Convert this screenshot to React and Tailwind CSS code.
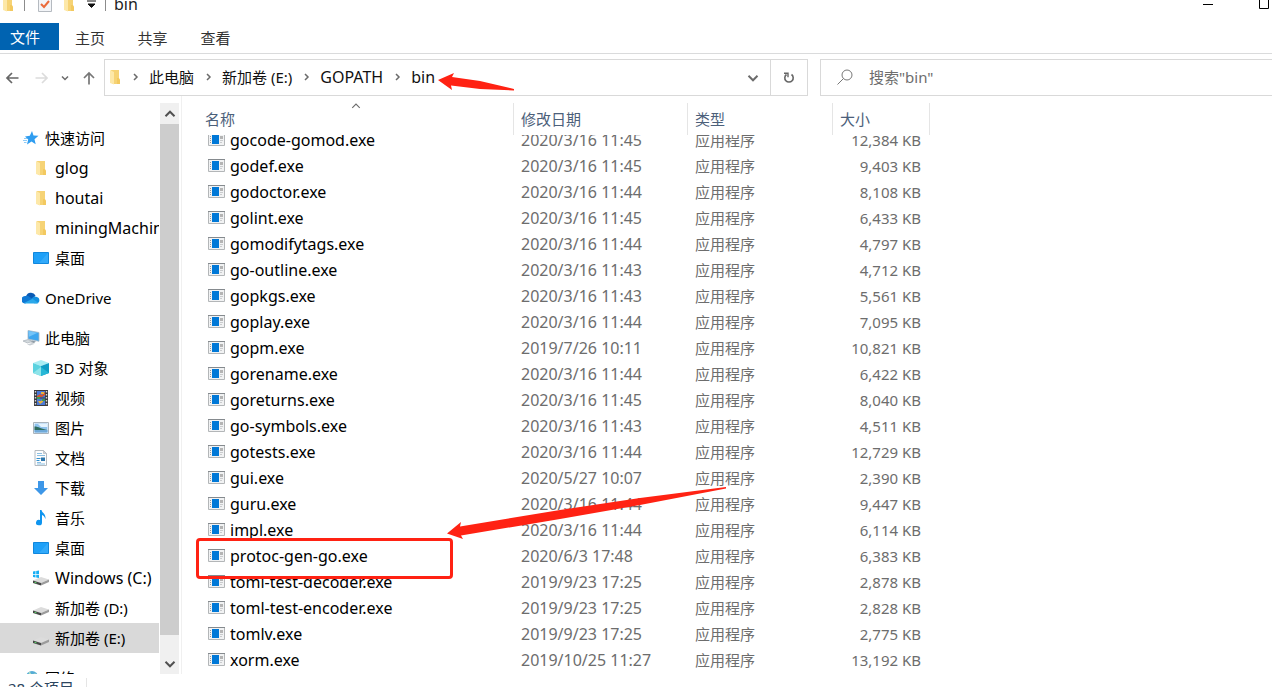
import React from "react";

const FILES = [
  { name: "gocode-gomod.exe", date: "2020/3/16 11:45", size: "12,384 KB" },
  { name: "godef.exe", date: "2020/3/16 11:45", size: "9,403 KB" },
  { name: "godoctor.exe", date: "2020/3/16 11:44", size: "8,108 KB" },
  { name: "golint.exe", date: "2020/3/16 11:45", size: "6,433 KB" },
  { name: "gomodifytags.exe", date: "2020/3/16 11:44", size: "4,797 KB" },
  { name: "go-outline.exe", date: "2020/3/16 11:43", size: "4,712 KB" },
  { name: "gopkgs.exe", date: "2020/3/16 11:43", size: "5,561 KB" },
  { name: "goplay.exe", date: "2020/3/16 11:44", size: "7,095 KB" },
  { name: "gopm.exe", date: "2019/7/26 10:11", size: "10,821 KB" },
  { name: "gorename.exe", date: "2020/3/16 11:44", size: "6,422 KB" },
  { name: "goreturns.exe", date: "2020/3/16 11:45", size: "8,040 KB" },
  { name: "go-symbols.exe", date: "2020/3/16 11:43", size: "4,511 KB" },
  { name: "gotests.exe", date: "2020/3/16 11:44", size: "12,729 KB" },
  { name: "gui.exe", date: "2020/5/27 10:07", size: "2,390 KB" },
  { name: "guru.exe", date: "2020/3/16 11:44", size: "9,447 KB" },
  { name: "impl.exe", date: "2020/3/16 11:44", size: "6,114 KB" },
  { name: "protoc-gen-go.exe", date: "2020/6/3 17:48", size: "6,383 KB" },
  { name: "toml-test-decoder.exe", date: "2019/9/23 17:25", size: "2,878 KB" },
  { name: "toml-test-encoder.exe", date: "2019/9/23 17:25", size: "2,828 KB" },
  { name: "tomlv.exe", date: "2019/9/23 17:25", size: "2,775 KB" },
  { name: "xorm.exe", date: "2019/10/25 11:27", size: "13,192 KB" },
];

const FolderIcon = () => (
  <svg width="12" height="16" viewBox="0 0 12 16" className="shrink-0">
    <path d="M2 1h8v9l1 1v4H3z" fill="#f6d375" />
    <path d="M8 9h2l1 2v4H8z" fill="#f3c95f" />
    <path d="M1 1l4 2v12.500L1 14z" fill="#fde8a8" />
  </svg>
);

const StarIcon = () => (
  <svg width="16" height="16" viewBox="0 0 16 16">
    <path d="M9 1l1.500 4.500 5 .3-4 3.400 1.200 5L8.500 11.500 4 14.500l1.200-5L2 6.500l4.800-.7z" fill="#2f9df0" />
    <path d="M1 8.500h3M0 10.500h4M1 12.500h2.500" stroke="#8fcbf7" />
  </svg>
);

const DesktopIcon = () => (
  <svg width="16" height="16" viewBox="0 0 16 16">
    <path d="M.5 2.500h15v11H.5z" fill="#1ea0f8" stroke="#1187dc" />
    <path d="M15 3v10H6z" fill="#48b4fb" opacity=".5" />
  </svg>
);

const CloudIcon = () => (
  <svg width="18" height="16" viewBox="0 0 18 16">
    <path d="M4 6.500A5.200 5.200 0 0113.500 5.500L10 10 1 8a3.500 3.500 0 013-1.500z" fill="#0a5ab4" />
    <path d="M3.500 6a4 4 0 013.800.8L12 10l-9 3.500A3.700 3.700 0 013.500 6z" fill="#0f78d4" />
    <path d="M9.500 8.500l2.500-2A4.800 4.800 0 0115 7a3.300 3.300 0 01.5 6.200H12z" fill="#1490df" />
    <path d="M2 13l8.500-4.300L16.500 13a3 3 0 01-1.500.5H4A4 4 0 012 13z" fill="#2aa8ea" />
  </svg>
);

const ThisPcIcon = () => (
  <svg width="18" height="16" viewBox="0 0 18 16">
    <path d="M6 .5l11 2v8.800L6 9z" fill="#3ea6ee" stroke="#a7b8c5" strokeWidth=".8" />
    <path d="M6.500 1l9 1.700-8.500 4z" fill="#74c4f8" />
    <path d="M10 10.500l4 1-2 1.500-4-1z" fill="#8e9aa4" />
    <path d="M1 11l5-1.500 4.500 1.800-5 1.700z" fill="#d3d9dd" stroke="#9ba5ad" strokeWidth=".6" />
    <path d="M5 14.500l5-1.500 3 .8-5 1.700z" fill="#c8ced3" />
  </svg>
);

const CubeIcon = () => (
  <svg width="16" height="16" viewBox="0 0 16 16">
    <path d="M8 0l8 3-8 3-8-3z" fill="#a9edf3" />
    <path d="M0 3l8 3v10l-8-3z" fill="#5bd2df" />
    <path d="M16 3L8 6v10l8-3z" fill="#0f9cc4" />
    <path d="M0 13l8-6v9z" fill="#8fe4ea" />
    <path d="M16 13L8 7v9z" fill="#27b7d6" />
  </svg>
);

const VideoIcon = () => (
  <svg width="16" height="16" viewBox="0 0 16 16">
    <path d="M1 0h14v16H1z" fill="#3b3b3f" />
    <path d="M2.500 1v15M13.500 1v15" stroke="#d9d9d9" strokeWidth="1.400" strokeDasharray="1.500 1.500" />
    <path d="M4 1h8v6.500H4zM4 8.500h8V15H4z" fill="#4a79d8" />
    <path d="M4 6l3-2 2 1 3-3v3L9 7H4z" fill="#d5572c" />
    <path d="M8 2h3v2H8zM5 11h3l2-1.500V12l-3 2z" fill="#e8b13b" />
    <path d="M4 7h3v2H4zM9 9h3v2H9z" fill="#3a9b57" />
  </svg>
);

const PictureIcon = () => (
  <svg width="16" height="16" viewBox="0 0 16 16">
    <path d="M.5 2.500h15v11H.5z" fill="#fff" stroke="#a9b3bb" />
    <path d="M1.500 3.500h13v9h-13z" fill="#8fc3ee" />
    <path d="M5 4h9.500v3H8z" fill="#e5f3fd" />
    <path d="M1.500 6.500c4 0 7 2.500 13 3.500H1.500z" fill="#2e6d5f" />
    <path d="M1.500 10h13v2.500h-13z" fill="#6fa9d8" />
  </svg>
);

const DocumentIcon = () => (
  <svg width="16" height="16" viewBox="0 0 16 16">
    <path d="M2 .5h8.500l3 3v12H2z" fill="#fdfdfd" stroke="#b4bbc1" />
    <path d="M10.500.5v3h3z" fill="#cfd6db" stroke="#b4bbc1" strokeWidth=".7" />
    <path d="M4 3.500h5M4 5.500h8M4 12.500h4M4 14h8" stroke="#8bbfe2" />
    <path d="M3.500 8.500h4M3.500 10.500h3" stroke="#3291d0" />
    <path d="M8 7.500h4v3.500H8z" fill="#2d77ad" />
  </svg>
);

const DownloadIcon = () => (
  <svg width="16" height="16" viewBox="0 0 16 16">
    <path d="M5 1h6v7h4l-7 7-7-7h4z" fill="#3d97e8" />
  </svg>
);

const MusicIcon = () => (
  <svg width="16" height="16" viewBox="0 0 16 16">
    <path d="M7 0h1.500c.5 3 4.500 3.500 4 9-1-2.500-2-3.500-3.500-4v7.500a3 2.800 0 11-2-2.600z" fill="#0f95ef" />
  </svg>
);

const DriveIcon = ({ system }) => (
  <svg width="16" height="16" viewBox="0 0 16 16">
    <path d="M0 10.500l8-3.500 8 2.500-8 3.500z" fill="#dcdcdc" />
    <path d="M0 10.500l8 2.500v2.500L0 13z" fill="#474747" />
    <path d="M8 13l8-3.500v2.500l-8 3.500z" fill="#9b9b9b" />
    <path d="M1.500 12.300l2 .6" stroke="#5fe06e" />
    {system && <path d="M0 1.500l2.500-.4V4H0zM3.200 1L6 .5V4H3.200zM0 4.700h2.500v2.800L0 7.100zM3.200 4.700H6V8l-2.800-.4z" fill="#17aef4" />}
  </svg>
);

const NetworkIcon = () => (
  <svg width="16" height="16" viewBox="0 0 16 16">
    <circle cx="9" cy="7" r="6" fill="#55acd6" />
    <path d="M6 2.500c2 1 1 3 3 3s1-2 4-1" stroke="#b6e3c0" strokeWidth="1.500" fill="none" />
    <path d="M1 9h7v6H1z" fill="#4a8dc0" />
  </svg>
);

const ExeIcon = () => (
  <svg width="17" height="13" viewBox="0 0 17 13" className="shrink-0 mb-0.5">
    <path d="M.5.5h16v12H.5z" fill="#f1f2f3" stroke="#b3b6b8" />
    <path d="M0 .5h17" stroke="#858a8e" />
    <path d="M2 3.500h1M2 5.500h1M2 7.500h1M2 9.500h1" stroke="#9a9a9a" />
    <path d="M4 2h7v9H4z" fill="#0078d7" />
    <path d="M12 3h3v3h-3z" fill="#b4b4b4" />
    <path d="M12 7.500h3M12 9.500h2" stroke="#c9cbcd" />
  </svg>
);

// direction: right | down | up
const CHEVRONS = {
  right: "M3 1l3 3-3 3",
  down: "M1 2.500l3 3 3-3",
  up: "M1 5.500l3-3 3 3",
};

const Chevron = ({ direction, size = 8, color = "#6b6b6b", width = 1.3 }) => (
  <svg width={size} height={size} viewBox="0 0 8 8" className="shrink-0">
    <path d={CHEVRONS[direction]} fill="none" stroke={color} strokeWidth={width} />
  </svg>
);

const NavArrow = ({ d, color }) => (
  <svg width="14" height="14" viewBox="0 0 14 14">
    <path d={d} fill="none" stroke={color} strokeWidth="1.700" />
  </svg>
);

const TREE = [
  {
    label: "快速访问",
    icon: <StarIcon />,
    children: [
      { label: "glog", icon: <FolderIcon />, latin: true },
      { label: "houtai", icon: <FolderIcon />, latin: true },
      { label: "miningMachine", icon: <FolderIcon />, latin: true },
      { label: "桌面", icon: <DesktopIcon /> },
    ],
  },
  { label: "OneDrive", icon: <CloudIcon />, children: [] },
  {
    label: "此电脑",
    icon: <ThisPcIcon />,
    children: [
      { label: "3D 对象", icon: <CubeIcon /> },
      { label: "视频", icon: <VideoIcon /> },
      { label: "图片", icon: <PictureIcon /> },
      { label: "文档", icon: <DocumentIcon /> },
      { label: "下载", icon: <DownloadIcon /> },
      { label: "音乐", icon: <MusicIcon /> },
      { label: "桌面", icon: <DesktopIcon /> },
      { label: "Windows (C:)", icon: <DriveIcon system />, latin: true },
      { label: "新加卷 (D:)", icon: <DriveIcon /> },
      { label: "新加卷 (E:)", icon: <DriveIcon />, selected: true },
    ],
  },
  { label: "网络", icon: <NetworkIcon />, children: [] },
];

const CRUMBS = [
  { label: "此电脑" },
  { label: "新加卷 (E:)" },
  { label: "GOPATH", latin: true },
  { label: "bin", latin: true },
];

const TitleBar = () => (
  <header className="flex items-center h-2 mb-[15px] shrink-0">
    <div className="flex items-center flex-1 pl-0.5">
      <FolderIcon />
      <span className="w-px h-[14px] ml-[10px] bg-[#8c8c8c]"></span>
      <button aria-label="属性" className="ml-[13px]">
        <svg width="14" height="16" viewBox="0 0 14 16">
          <path d="M.5.5h13v15H.5z" fill="#f3f5f8" stroke="#b5bac0" />
          <path d="M3 8l3 3 5-6" fill="none" stroke="#ea6b3c" strokeWidth="2" />
        </svg>
      </button>
      <button aria-label="新建文件夹" className="ml-[11px]">
        <FolderIcon />
      </button>
      <button aria-label="自定义快速访问工具栏" className="ml-3">
        <svg width="9" height="8" viewBox="0 0 9 8">
          <path d="M0 1h9M1 4h7L4.500 7.500z" fill="#111" stroke="#111" strokeWidth="1" />
        </svg>
      </button>
      <span className="w-px h-[14px] ml-[9px] bg-[#8c8c8c]"></span>
      <h1 className="ml-2 text-base leading-5">bin</h1>
    </div>
    <button aria-label="最小化" className="mr-[46px]">
      <svg width="10" height="10" viewBox="0 0 10 10">
        <path d="M0 5.500h10" stroke="#000" />
      </svg>
    </button>
    <button aria-label="最大化" className="mr-[3px]">
      <svg width="10" height="10" viewBox="0 0 10 10">
        <path d="M.5.5h9v9H.5z" fill="none" stroke="#000" />
      </svg>
    </button>
  </header>
);

const Ribbon = () => (
  <nav className="flex h-[31px] shrink-0 border-b border-[#dadbdc] text-[#333]">
    <button className="w-[59px] h-[27px] pr-[9px] bg-[#0063b1] text-white">文件</button>
    <button className="w-[62px] h-[30px]">主页</button>
    <button className="w-[63px] h-[30px]">共享</button>
    <button className="w-[63px] h-[30px]">查看</button>
  </nav>
);

const AddressRow = () => (
  <div className="flex items-stretch h-[37px] mt-[5px] shrink-0">
    <div className="flex items-center w-[104px] pl-[5px] shrink-0">
      <button aria-label="后退">
        <NavArrow d="M13.500 7H2M7 2L2 7l5 5" color="#666" />
      </button>
      <button aria-label="前进" className="ml-4">
        <NavArrow d="M.5 7H12M7 2l5 5-5 5" color="#dcdcdc" />
      </button>
      <button aria-label="最近浏览的位置" className="ml-3">
        <Chevron direction="down" width={1.5} />
      </button>
      <button aria-label="上移" className="ml-[13px]">
        <NavArrow d="M7 13.500V2M2 7l5-5 5 5" color="#777" />
      </button>
    </div>
    <div className="flex items-stretch flex-1 border border-[#d9d9d9]">
      <div className="flex items-center flex-1 pl-1 pb-0.5">
        <FolderIcon />
        {CRUMBS.map((crumb) => (
          <React.Fragment key={crumb.label}>
            <span className="flex justify-center w-[28px]">
              <Chevron direction="right" width={1.5} />
            </span>
            <a href="#" className={crumb.latin ? "text-base leading-5 text-[#111]" : "text-[#111]"}>
              {crumb.label}
            </a>
          </React.Fragment>
        ))}
      </div>
      <button aria-label="以前的位置" className="flex items-center justify-center w-[34px]">
        <Chevron direction="down" size={12} />
      </button>
      <button aria-label="刷新" className="flex items-center justify-center w-[37px] border-l border-[#d9d9d9]">
        <svg width="12" height="14" viewBox="0 0 12 14">
          <path d="M8.500 3.500A4.200 4.200 0 113.500 3.500" fill="none" stroke="#666" strokeWidth="1.600" />
          <path d="M1 2.300h4v4" fill="none" stroke="#666" strokeWidth="1.400" />
        </svg>
      </button>
    </div>
    <label className="flex items-center w-[452px] ml-3 pl-4 pb-0.5 border border-r-0 border-[#d9d9d9]">
      <svg width="16" height="16" viewBox="0 0 16 16" className="shrink-0">
        <circle cx="10" cy="6" r="5" fill="none" stroke="#777" />
        <path d="M6.500 9.500L.5 15.500" stroke="#777" />
      </svg>
      <input
        type="text"
        aria-label="搜索"
        placeholder='搜索"bin"'
        className="flex-1 min-w-0 ml-4 outline-none placeholder:text-[#6d6d6d]"
      />
    </label>
  </div>
);

const TreeItem = ({ item, nested }) => (
  <a
    href="#"
    className={`flex items-center h-[30px] whitespace-nowrap ${nested ? "pl-8" : "pl-[22px]"} ${item.latin ? "text-base" : ""} ${item.selected ? "bg-[#d9d9d9]" : ""}`}
  >
    <span className={`flex justify-center shrink-0 ${nested ? "w-[17px] mr-1.5" : "w-[18px] mr-[5px]"}`}>{item.icon}</span>
    {item.label}
  </a>
);

const Sidebar = () => (
  <aside className="flex shrink-0 border-r border-[#f0f0f0]">
    <div className="flex flex-col gap-[10px] w-[159px] pt-[27px] overflow-hidden text-black">
      {TREE.map((group) => (
        <div key={group.label}>
          <TreeItem item={group} />
          {group.children.map((child) => (
            <TreeItem key={child.label} item={child} nested />
          ))}
        </div>
      ))}
    </div>
    <div className="flex flex-col w-[19px] mt-[7px] ml-px mr-[2px] bg-[#f0f0f0]">
      <button aria-label="向上滚动" className="flex items-center justify-center h-[21px] shrink-0">
        <Chevron direction="up" size={12} color="#505050" />
      </button>
      <div className="flex-1 bg-[#cdcdcd]"></div>
      <button aria-label="向下滚动" className="flex items-center justify-center h-[21px] mt-[18px] shrink-0">
        <Chevron direction="down" size={12} color="#505050" />
      </button>
    </div>
  </aside>
);

const HeaderCell = ({ label, className }) => (
  <th className="relative z-10 h-6 p-0 font-normal text-left">
    <div className={`h-8 -mb-2 bg-white border-r border-[#e5e5e5] leading-8 text-[#4c607a] ${className}`}>
      {label}
    </div>
  </th>
);

const FileTable = () => (
  <table className="table-fixed border-collapse w-[748px] mt-[7px]">
    <colgroup>
      <col className="w-[332px]" />
      <col className="w-[174px]" />
      <col className="w-[145px]" />
      <col className="w-[97px]" />
    </colgroup>
    <thead>
      <tr>
        <HeaderCell
          className="pl-[23px]"
          label={
            <>
              名称
              <span className="absolute -top-0.5 left-0 flex justify-center w-full pl-4">
                <Chevron direction="up" size={10} width={0.9} />
              </span>
            </>
          }
        />
        <HeaderCell className="pl-[7px]" label="修改日期" />
        <HeaderCell className="pl-[7px]" label="类型" />
        <HeaderCell className="pl-[7px]" label="大小" />
      </tr>
    </thead>
    <tbody>
      {FILES.map((file) => (
        <tr key={file.name} className="h-[26px] leading-[26px] text-[#6d6d6d] whitespace-nowrap">
          <td className="p-0">
            <div className="flex items-center h-[26px] gap-[5px] pl-[26px] text-base leading-5 text-black">
              <ExeIcon />
              {file.name}
            </div>
          </td>
          <td className="p-0 pl-[7px] text-base leading-[26px]">{file.date}</td>
          <td className="p-0 pl-[7px]">应用程序</td>
          <td className="p-0 pr-[9px] text-right">{file.size}</td>
        </tr>
      ))}
    </tbody>
  </table>
);

// red marker arrows and frame drawn over the window
const Annotations = () => (
  <svg className="absolute inset-0 w-full h-full pointer-events-none">
    <path d="M438 80L454 73 452 77 480 81 514 89V90.500L480 89 451 85.500 452 90z" fill="#ff2213" />
    <path d="M447 533.500L461 522 460 526.500 560 510 640 498 726 487V488.500L640 505 560 519 461 535.500 463 539z" fill="#ff2213" />
    <rect x="197.500" y="539.500" width="254" height="38" rx="2.500" fill="none" stroke="#ff2213" strokeWidth="3" />
  </svg>
);

export default function App() {
  return (
    <div className="relative flex flex-col h-screen overflow-hidden bg-white text-[15px] leading-5 text-[#222] font-['Noto_Sans','Noto_Sans_CJK_SC',sans-serif]">
      <TitleBar />
      <Ribbon />
      <AddressRow />
      <div className="flex flex-1 min-h-0">
        <Sidebar />
        <main className="flex-1 min-w-0 overflow-hidden">
          <FileTable />
        </main>
      </div>
      <footer className="flex h-[13px] pl-2 shrink-0 overflow-hidden text-[#2c4560]">
        <span className="h-6 mt-1 pr-3 border-r border-[#e5e5e5]">28 个项目</span>
      </footer>
      <Annotations />
    </div>
  );
}
